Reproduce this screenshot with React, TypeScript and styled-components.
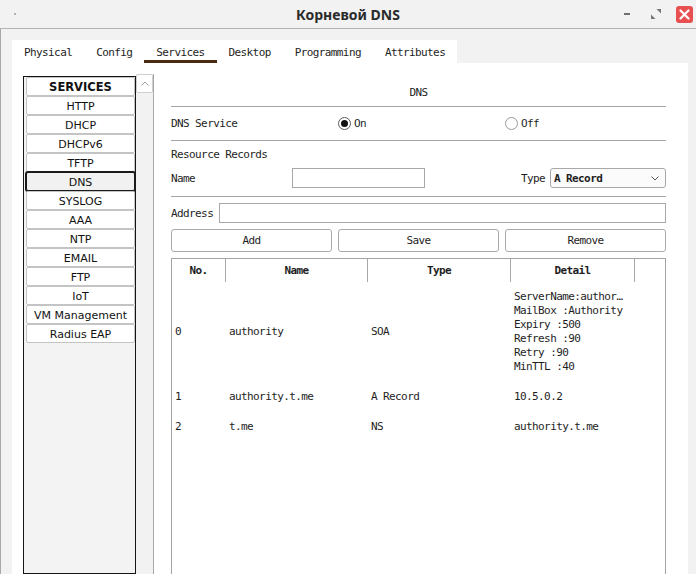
import React from "react";
import styled, { createGlobalStyle, css } from "styled-components";

const Global = createGlobalStyle`
  html, body { margin: 0; padding: 0; background: #f2f2f2; }
  #root { width: 696px; height: 574px; }
  * { box-sizing: border-box; }
`;

const mono = css`
  font-family: "DejaVu Sans Mono", monospace;
  font-size: 11px;
  letter-spacing: -0.6px;
  color: #1e1e1e;
`;

const Window = styled.div`
  width: 696px;
  height: 574px;
  overflow: hidden;
  display: flex;
  flex-direction: column;
  background: #f2f2f2;
`;

const TitleBar = styled.div`
  height: 29px;
  flex-shrink: 0;
  border-bottom: 1px solid #b4b4b4;
  display: grid;
  grid-template-columns: 1fr auto 1fr;
  align-items: center;
`;

const MenuDot = styled.span`
  width: 2px;
  height: 2px;
  margin-left: 14px;
  background: #9a9a9a;
  border-radius: 1px;
`;

const Title = styled.div`
  font-family: "Noto Sans", sans-serif;
  font-weight: 700;
  font-size: 14px;
  color: #2a2a2a;
`;

const Controls = styled.div`
  display: flex;
  align-items: center;
  justify-content: flex-end;
  padding-right: 3px;
`;

const Minimize = styled.span`
  width: 6px;
  height: 2px;
  background: #707070;
  margin-right: 21px;
`;

const Restore = styled.svg`
  width: 10px;
  height: 10px;
  margin-right: 15px;
`;

const Close = styled.span`
  width: 17px;
  height: 17px;
  border-radius: 3px;
  background: #e84f50;
  display: flex;
  align-items: center;
  justify-content: center;
`;

const Body = styled.div`
  flex: 1;
  min-height: 0;
  display: flex;
  flex-direction: column;
  border-left: 1px solid #a8a8a8;
  padding: 11px 8px 0 11px;
`;

const TabStrip = styled.div`
  align-self: flex-start;
  display: flex;
  height: 23px;
  background: #fff;
`;

const Tab = styled.div<{ $active?: boolean }>`
  ${mono};
  padding: 1px 12px 0;
  display: flex;
  align-items: center;
  box-shadow: ${(p) => (p.$active ? "inset 0 -3px 0 #4b2a12" : "none")};
`;

const Panel = styled.div`
  flex: 1;
  min-height: 0;
  display: flex;
  background: #fff;
  padding: 0 22px 0 11px;
`;

const LeftCol = styled.div`
  display: flex;
  width: 131px;
  flex-shrink: 0;
  margin-top: 13px;
`;

const ListBox = styled.div`
  width: 113px;
  border: 1px solid #141414;
  background: #f3f3f3;
  padding: 0 0 0 2px;
  display: flex;
  flex-direction: column;
`;

const ListItem = styled.div<{ $selected?: boolean; $header?: boolean }>`
  height: 19px;
  padding-top: 1px;
  display: flex;
  align-items: center;
  justify-content: center;
  font-family: "DejaVu Sans", sans-serif;
  font-size: ${(p) => (p.$header ? "11.5px" : "11px")};
  font-weight: ${(p) => (p.$header ? 700 : 400)};
  color: #111;
  background: ${(p) => (p.$selected ? "#f1f1f1" : "#fff")};
  border: 1px solid ${(p) => (p.$selected ? "#1a1a1a" : "#c4c4c4")};
  box-shadow: ${(p) => (p.$selected ? "0 0 0 1px #1a1a1a" : "none")};
  border-radius: 2px;
`;

const ScrollTrack = styled.div`
  width: 18px;
  margin-top: -2px;
  background: #f2f2f2;
  border-right: 1px solid #a8a8a8;
`;

const ScrollUp = styled.div`
  height: 19px;
  background: #fff;
  border: 1px solid #cfcfcf;
  border-radius: 2px;
  display: flex;
  align-items: center;
  justify-content: center;
`;

const RightCol = styled.div`
  width: 495px;
  margin-left: 17px;
  display: flex;
  flex-direction: column;
  ${mono};
`;

const SectionTitle = styled.div`
  padding: 23px 0 6px;
  line-height: 14px;
  text-align: center;
  border-bottom: 1px solid #a4a4a4;
`;

const ServiceRow = styled.div`
  height: 34px;
  display: grid;
  grid-template-columns: 167px 167px 1fr;
  align-items: center;
  border-bottom: 1px solid #a4a4a4;
`;

const RadioLabel = styled.label`
  display: flex;
  align-items: center;
  gap: 3px;
`;

const RadioCircle = styled.span<{ $checked?: boolean }>`
  width: 13px;
  height: 13px;
  border-radius: 50%;
  border: 1px solid ${(p) => (p.$checked ? "#5a5a5a" : "#9a9a9a")};
  background: #fff;
  display: flex;
  align-items: center;
  justify-content: center;
  &::after {
    content: "";
    width: 7px;
    height: 7px;
    border-radius: 50%;
    background: ${(p) => (p.$checked ? "#111" : "transparent")};
  }
`;

const RecordsSection = styled.div`
  padding: 7px 0 8px;
  border-bottom: 1px solid #a4a4a4;
`;

const LineText = styled.div`
  line-height: 14px;
`;

const NameRow = styled.div`
  margin-top: 6px;
  height: 20px;
  display: flex;
  align-items: center;
`;

const FieldLabel = styled.span<{ $w: number }>`
  width: ${(p) => p.$w}px;
  flex-shrink: 0;
`;

const TextInput = styled.div<{ $w?: number }>`
  height: 20px;
  ${(p) => (p.$w ? `width: ${p.$w}px;` : "flex: 1;")}
  border: 1px solid #a8a8a8;
  background: #fff;
`;

const TypeLabel = styled.span`
  margin-left: auto;
  margin-right: 5px;
`;

const Select = styled.div`
  width: 116px;
  height: 20px;
  border: 1px solid #a8a8a8;
  border-radius: 3px;
  background: #fbfbfb;
  display: flex;
  align-items: center;
  justify-content: space-between;
  padding: 0 6px 0 3px;
  font-weight: 700;
`;

const AddressRow = styled.div`
  margin-top: 6px;
  display: flex;
  align-items: center;
`;

const ButtonRow = styled.div`
  margin-top: 6px;
  display: grid;
  grid-template-columns: repeat(3, 1fr);
  gap: 6px;
`;

const Button = styled.div`
  height: 23px;
  border: 1px solid #aaaaaa;
  border-radius: 3px;
  background: #fff;
  display: flex;
  align-items: center;
  justify-content: center;
`;

const Table = styled.div`
  margin-top: 6px;
  flex: 1;
  border: 1px solid #a4a4a4;
  border-bottom: none;
  background: #fff;
`;

const columns = "54px 142px 143px 124px 1fr";

const HeaderRow = styled.div`
  display: grid;
  grid-template-columns: ${columns};
  height: 23px;
`;

const HeaderCell = styled.div<{ $last?: boolean }>`
  font-weight: 700;
  text-align: center;
  line-height: 23px;
  border-right: ${(p) => (p.$last ? "none" : "1px solid #a8a8a8")};
`;

const DataRow = styled.div`
  display: grid;
  grid-template-columns: ${columns};
  align-items: center;
  padding: 8px 0 8px;
`;

const Cell = styled.div`
  padding-left: 3px;
  line-height: 14px;
  white-space: nowrap;
`;

const services = [
  "HTTP",
  "DHCP",
  "DHCPv6",
  "TFTP",
  "DNS",
  "SYSLOG",
  "AAA",
  "NTP",
  "EMAIL",
  "FTP",
  "IoT",
  "VM Management",
  "Radius EAP",
];

const tabs = ["Physical", "Config", "Services", "Desktop", "Programming", "Attributes"];

const records = [
  {
    no: "0",
    name: "authority",
    type: "SOA",
    detail: [
      "ServerName:author…",
      "MailBox :Authority",
      "Expiry :500",
      "Refresh :90",
      "Retry :90",
      "MinTTL :40",
    ],
  },
  { no: "1", name: "authority.t.me", type: "A Record", detail: ["10.5.0.2"] },
  { no: "2", name: "t.me", type: "NS", detail: ["authority.t.me"] },
];

export default function App() {
  return (
    <>
      <Global />
      <Window>
        <TitleBar>
          <MenuDot />
          <Title>Корневой DNS</Title>
          <Controls>
            <Minimize />
            <Restore viewBox="0 0 10 10">
              <path d="M5.5 0H10V4.5Z" fill="#777" />
              <path d="M0 10V5.5L4.5 10Z" fill="#777" />
            </Restore>
            <Close>
              <svg width="11" height="11" viewBox="0 0 11 11">
                <path d="M1.5 1.5L9.5 9.5M9.5 1.5L1.5 9.5" stroke="#fff" strokeWidth="2.2" strokeLinecap="round" />
              </svg>
            </Close>
          </Controls>
        </TitleBar>
        <Body>
          <TabStrip>
            {tabs.map((t) => (
              <Tab key={t} $active={t === "Services"}>
                {t}
              </Tab>
            ))}
          </TabStrip>
          <Panel>
            <LeftCol>
              <ListBox>
                <ListItem $header>SERVICES</ListItem>
                {services.map((s) => (
                  <ListItem key={s} $selected={s === "DNS"}>
                    {s}
                  </ListItem>
                ))}
              </ListBox>
              <ScrollTrack>
                <ScrollUp>
                  <svg width="8" height="5" viewBox="0 0 8 5">
                    <path d="M0.5 4.5L4 1L7.5 4.5" stroke="#a0a0a0" fill="none" strokeWidth="1" />
                  </svg>
                </ScrollUp>
              </ScrollTrack>
            </LeftCol>
            <RightCol>
              <SectionTitle>DNS</SectionTitle>
              <ServiceRow>
                <span>DNS Service</span>
                <RadioLabel>
                  <RadioCircle $checked />
                  On
                </RadioLabel>
                <RadioLabel>
                  <RadioCircle />
                  Off
                </RadioLabel>
              </ServiceRow>
              <RecordsSection>
                <LineText>Resource Records</LineText>
                <NameRow>
                  <FieldLabel $w={121}>Name</FieldLabel>
                  <TextInput $w={133} />
                  <TypeLabel>Type</TypeLabel>
                  <Select>
                    <span>A Record</span>
                    <svg width="8" height="5" viewBox="0 0 8 5">
                      <path d="M0.5 0.5L4 4L7.5 0.5" stroke="#555" fill="none" strokeWidth="1" />
                    </svg>
                  </Select>
                </NameRow>
              </RecordsSection>
              <AddressRow>
                <FieldLabel $w={48}>Address</FieldLabel>
                <TextInput />
              </AddressRow>
              <ButtonRow>
                <Button>Add</Button>
                <Button>Save</Button>
                <Button>Remove</Button>
              </ButtonRow>
              <Table>
                <HeaderRow>
                  <HeaderCell>No.</HeaderCell>
                  <HeaderCell>Name</HeaderCell>
                  <HeaderCell>Type</HeaderCell>
                  <HeaderCell>Detail</HeaderCell>
                  <HeaderCell $last />
                </HeaderRow>
                {records.map((r) => (
                  <DataRow key={r.no}>
                    <Cell>{r.no}</Cell>
                    <Cell>{r.name}</Cell>
                    <Cell>{r.type}</Cell>
                    <Cell>
                      {r.detail.map((d) => (
                        <div key={d}>{d}</div>
                      ))}
                    </Cell>
                    <Cell />
                  </DataRow>
                ))}
              </Table>
            </RightCol>
          </Panel>
        </Body>
      </Window>
    </>
  );
}
